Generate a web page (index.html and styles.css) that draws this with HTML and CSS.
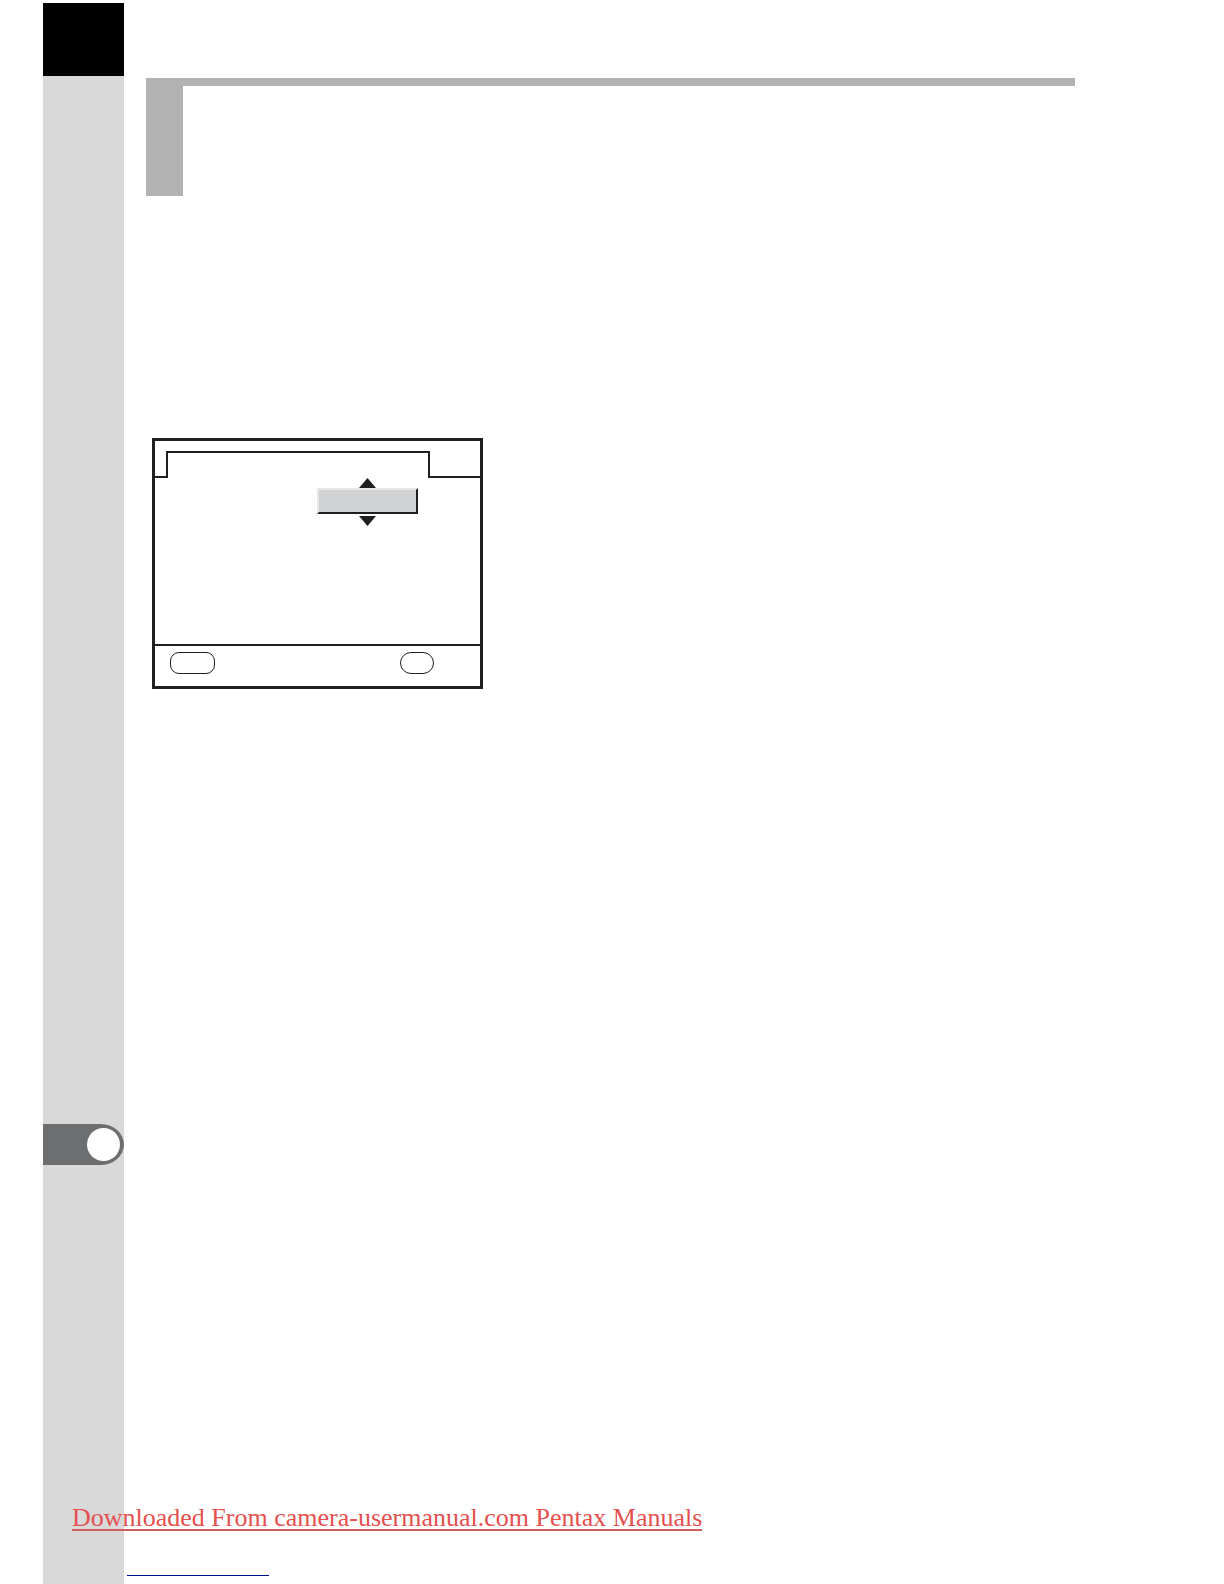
FILE: index.html
```html
<!DOCTYPE html>
<html lang="en">
<head>
<meta charset="utf-8">
<meta name="viewport" content="width=device-width, initial-scale=1">
<title>Pentax Manuals</title>
<link rel="stylesheet" href="styles.css">
</head>
<body>
<div class="page">
  <aside class="rail">
    <div class="rail-head"></div>
    <div class="marker"><span class="marker-dot"></span></div>
  </aside>
  <main class="content">
    <header class="section-head"><div class="section-block"></div></header>
    <section class="screen" aria-label="Camera menu">
      <div class="tabs">
        <div class="shoulder"></div>
        <div class="tab"></div>
        <div class="shoulder"></div>
      </div>
      <div class="screen-body">
        <div class="picker">
          <svg class="arrow" viewBox="0 0 17 10" aria-hidden="true"><path d="M8.500 0 17 10H0z"/></svg>
          <button class="picker-value" type="button" aria-label="Value"></button>
          <svg class="arrow arrow-down" viewBox="0 0 17 10" aria-hidden="true"><path d="M0 0h17L8.500 10z"/></svg>
        </div>
      </div>
      <div class="screen-foot">
        <button class="key key-wide" type="button" aria-label="Menu"></button>
        <button class="key" type="button" aria-label="OK"></button>
      </div>
    </section>
  </main>
  <footer class="footer">
    <a class="source" href="#">Downloaded From camera-usermanual.com Pentax Manuals</a>
    <a class="blank-link" href="#" aria-label="Website"></a>
  </footer>
</div>
</body>
</html>
```
FILE: styles.css
```css
* {
  box-sizing: border-box;
}

body {
  margin: 0;
  background: #fff;
  font-family: "Liberation Serif", "Times New Roman", serif;
}

.page {
  display: grid;
  grid-template-columns: 81px 1fr;
  grid-template-rows: 1fr auto;
  min-height: 100vh;
  padding: 3px 0 0 43px;
}

.rail {
  grid-column: 1;
  grid-row: 1 / 3;
  display: flex;
  flex-direction: column;
  background: #d9d9d9;
}

.rail-head {
  height: 73px;
  background: #000;
}

.marker {
  display: flex;
  justify-content: flex-end;
  margin: auto 0 419px;
  padding: 4px;
  background: #6d6e70;
  border-radius: 0 24px 24px 0 / 0 21px 21px 0;
}

.marker-dot {
  width: 33px;
  height: 33px;
  border-radius: 50%;
  background: #fff;
}

.content {
  grid-column: 2;
  grid-row: 1;
  padding: 75px 149px 0 22px;
}

.section-head {
  border-top: 8px solid #b2b2b2;
}

.section-block {
  width: 37px;
  height: 110px;
  background: #b2b2b2;
}

.screen {
  width: 331px;
  margin: 242px 0 0 6px;
  padding-top: 10px;
  border: 3px solid #211e1f;
}

.tabs {
  display: grid;
  grid-template-columns: 11px 1fr 50px;
  height: 27px;
}

.shoulder {
  border-bottom: 2px solid #211e1f;
}

.tab {
  border: 2px solid #211e1f;
  border-bottom: 0;
}

.screen-body {
  display: flex;
  justify-content: flex-end;
  height: 166px;
  padding-right: 62px;
}

.picker {
  display: flex;
  flex-direction: column;
  align-items: center;
  width: 101px;
}

.arrow {
  display: block;
  width: 17px;
  height: 10px;
  fill: #211e1f;
}

.arrow-down {
  margin-top: 2px;
}

.picker-value {
  width: 100%;
  height: 26px;
  padding: 0;
  background: #d1d2d4;
  border: 2px solid;
  border-color: #e6e6e6 #211e1f #211e1f #e6e6e6;
}

.screen-foot {
  display: flex;
  justify-content: space-between;
  padding: 6px 46px 12px 15px;
  border-top: 2px solid #211e1f;
}

.key {
  width: 34px;
  height: 22px;
  padding: 0;
  background: #fff;
  border: 1px solid #211e1f;
  border-radius: 11px;
}

.key-wide {
  width: 45px;
  border-radius: 9px;
}

.footer {
  grid-column: 1 / 3;
  grid-row: 2;
  display: flex;
  flex-direction: column;
  align-items: flex-start;
  gap: 44px;
  padding: 0 0 8px 29px;
}

.source {
  border-bottom: 2px solid #cf5d5c;
  color: #e4504f;
  font-size: 26px;
  line-height: 22px;
  text-decoration: none;
}

.blank-link {
  width: 142px;
  margin-left: 55px;
  border-bottom: 1px solid #00108c;
}
```
